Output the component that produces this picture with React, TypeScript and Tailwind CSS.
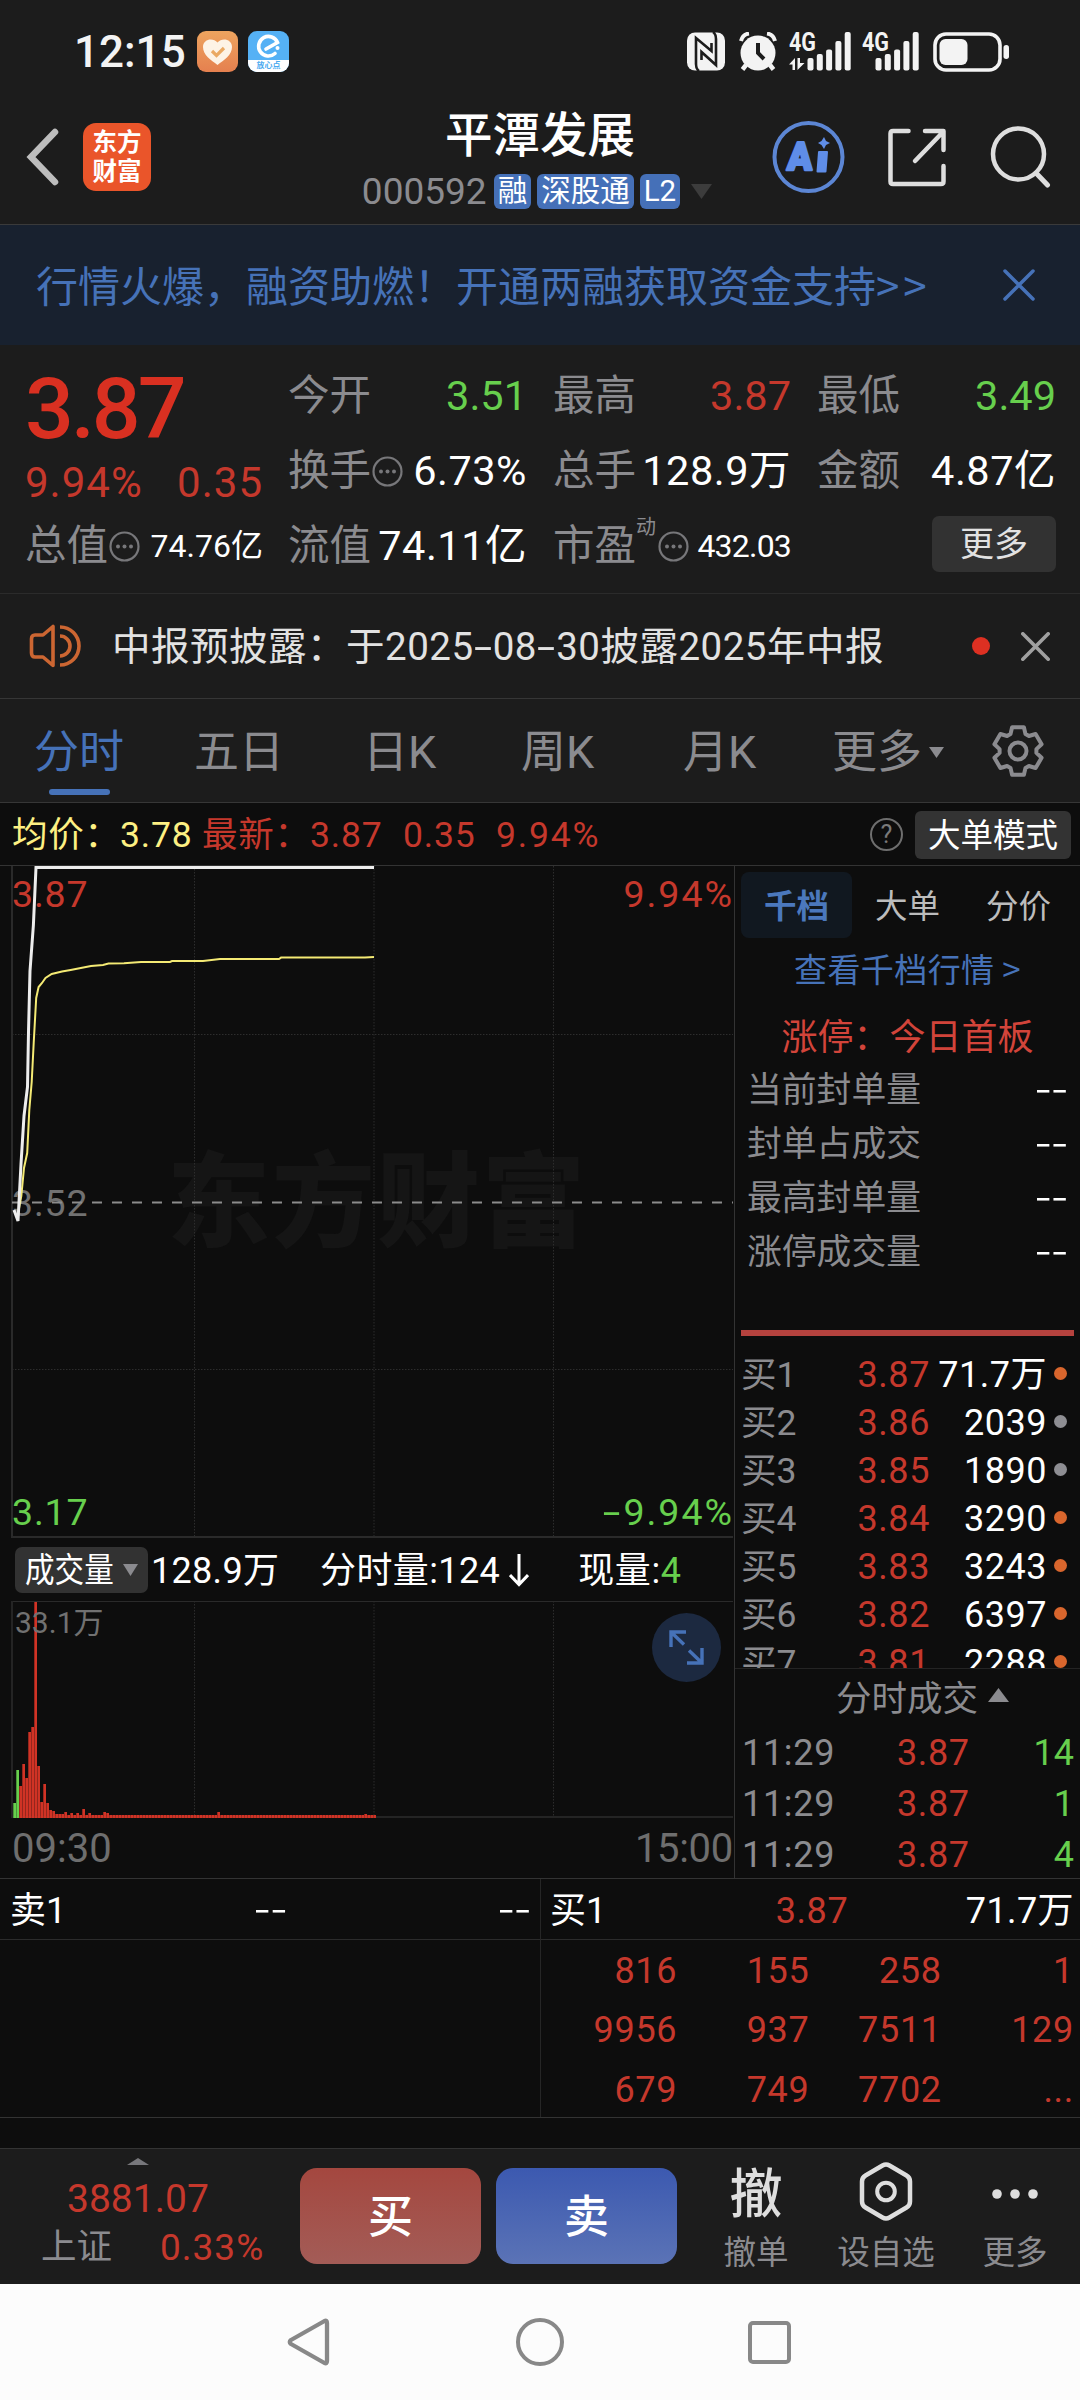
import type { ReactNode } from 'react';
import clsx from 'clsx';

const RED = 'text-[#c5382c]';
const GREEN = 'text-[#67cf4d]';

const bids = [
  { level: '买1', price: '3.87', volume: '71.7万', hot: true },
  { level: '买2', price: '3.86', volume: '2039', hot: false },
  { level: '买3', price: '3.85', volume: '1890', hot: false },
  { level: '买4', price: '3.84', volume: '3290', hot: true },
  { level: '买5', price: '3.83', volume: '3243', hot: true },
  { level: '买6', price: '3.82', volume: '6397', hot: true },
  { level: '买7', price: '3.81', volume: '2288', hot: true },
];

const ticks = [
  { time: '11:29', price: '3.87', volume: '14' },
  { time: '11:29', price: '3.87', volume: '1' },
  { time: '11:29', price: '3.87', volume: '4' },
];

const queue = [
  ['816', '155', '258', '1'],
  ['9956', '937', '7511', '129'],
  ['679', '749', '7702', '...'],
];

const sealStats = ['当前封单量', '封单占成交', '最高封单量', '涨停成交量'];

// Minute volumes in pixels, the quiet minutes after the limit-up are all the same height
const openingVolumes = [
  15, 48, 32, 54, 40, 86, 91, 216, 52, 16, 34, 15, 8, 7, 4, 4, 4, 6, 3, 5, 3, 5, 3, 9, 3, 5, 3, 3, 3, 3, 6, 5,
];
const volumes = Array.from({ length: 121 }, (_, i) => {
  if (i < openingVolumes.length) return openingVolumes[i];
  if (i === 68) return 6;
  if (i === 117) return 4;
  return 3;
});

const pricePoints = '14,344 18,355 21,298 24,250 27.5,221 28.5,166 30,105 33.4,59 36,1.5 374,1.5';
const averagePoints =
  '18,348 21.3,330 24,302 27.2,287 29.3,244 31.7,216 33.7,177 36.2,132 38.6,121 42,117 45.5,112 51.7,108 62,105.5 70.6,104 91,100 103,99 108.5,97.6 124,97.3 141,96 170,96 172,95 203,95 220,93 279,93 281,91.6 365,91.6 374,91';

export default function App() {
  return (
    <div className="flex h-[2400px] w-[1080px] flex-col overflow-hidden bg-[#0d0d0d] font-[Roboto,'Noto_Sans_CJK_SC',sans-serif] leading-none whitespace-nowrap text-white">
      <div className="h-[225px] border-b border-[#3a3a3a] bg-[#1c1c1c]">
        <StatusBar />
        <Header />
      </div>
      <Banner />
      <Quote />
      <Notice />
      <PeriodTabs />
      <AverageRow />
      <div className="flex h-[1012px]">
        <div className="w-[734px]">
          <PriceChart />
          <VolumeHeader />
          <VolumeChart />
          <div className="flex h-[60px] items-center justify-between pt-[2px] pr-[1px] pl-[12px] text-[40px] text-[#6e6e6e]">
            <span>09:30</span>
            <span className="tracking-[-0.300px]">15:00</span>
          </div>
        </div>
        <OrderBook />
      </div>
      <BestOrders />
      <BottomBar />
      <NavBar />
    </div>
  );
}

function StatusBar() {
  return (
    <div className="flex h-[103px] items-center pl-[74px] text-[#f3f3f3]">
      <span className="w-[123px] pt-[1px] text-[44px] font-medium">12:15</span>
      <svg width="41" height="41" viewBox="0 0 41 41">
        <defs>
          <linearGradient id="heartBg" x1="0" y1="0" x2="0" y2="1">
            <stop offset="0" stopColor="#eda45f" />
            <stop offset="1" stopColor="#e5804f" />
          </linearGradient>
        </defs>
        <rect width="41" height="41" rx="9" fill="url(#heartBg)" />
        <path
          d="M20.500 34C14 29 6 24 6 16C6 8 16 6 20.500 11.500C25 6 35 8 35 16C35 24 27 29 20.500 34Z"
          fill="#fdf3e6"
        />
        <path d="M15 20L19.500 24.500L27 17" fill="none" stroke="#eaa963" strokeWidth="3.200" />
      </svg>
      <div className="ml-[10px] flex h-[41px] w-[41px] flex-col items-center overflow-hidden rounded-[9px] bg-[#55b1f5]">
        <svg width="41" height="29" viewBox="0 0 41 29">
          <path
            d="M18 18L29.500 11.500A9.800 9.800 0 1 0 27 22.500"
            fill="none"
            stroke="white"
            strokeWidth="3.600"
            strokeLinecap="round"
          />
          <circle cx="29.500" cy="17" r="2" fill="white" />
        </svg>
        <span className="flex h-[12px] w-full items-center justify-center bg-white text-[8px] font-bold text-[#4aaaf0]">
          放心点
        </span>
      </div>

      <svg className="ml-[398px]" width="38" height="39" viewBox="0 0 38 39">
        <rect y="0.500" width="38" height="38" rx="8" fill="#f3f3f3" />
        <path
          d="M12 39Q9 37 9 32V6L24.500 19V11M26 0Q29 2 29 7V33L14.500 20V28"
          fill="none"
          stroke="#1c1c1c"
          strokeWidth="2.600"
        />
      </svg>
      <svg className="ml-[14px]" width="38" height="39" viewBox="0 0 38 39">
        <circle cx="19" cy="21" r="17.500" fill="#f3f3f3" />
        <path d="M2 9C3 5 6 2 10 1.500M36 9C35 5 32 2 28 1.500" stroke="#f3f3f3" strokeWidth="4" fill="none" />
        <path d="M7 33L3.500 37.500M31 33L34.500 37.500" stroke="#f3f3f3" strokeWidth="4.500" />
        <path d="M19 11V21L25 27" stroke="#1c1c1c" strokeWidth="4" fill="none" />
      </svg>
      <Signal className="ml-[12px] overflow-visible" data />
      <Signal className="ml-[11px] overflow-visible" />
      <svg className="ml-[14px]" width="77" height="40" viewBox="0 0 77 40">
        <rect x="2" y="2" width="65" height="36" rx="11" fill="none" stroke="#f3f3f3" strokeWidth="3.600" />
        <rect x="6.500" y="7" width="28" height="26" rx="6" fill="#f3f3f3" />
        <rect x="70.500" y="13" width="5.500" height="14" rx="2.700" fill="#f3f3f3" />
      </svg>
    </div>
  );
}

function Signal({ className, data }: { className?: string; data?: boolean }) {
  const offset = data ? 18.5 : 13.5;
  const tops = [26, 22, 17.5, 9, 0];

  return (
    <svg className={className} width={data ? 62 : 57} height="39" viewBox={data ? '0 0 62 39' : '0 0 57 39'}>
      <text x="0" y="19" fontSize="26" fontWeight="700" fill="#f3f3f3" textLength="27" lengthAdjust="spacingAndGlyphs">
        4G
      </text>
      {data && (
        <path d="M0 32.500L6 26V38H3.500V32.500ZM8.500 26V38L15.500 31H11V26Z" fill="#f3f3f3" />
      )}
      {tops.map((top, i) => (
        <rect key={top} x={offset + i * 9.300} y={top} width="6" height={38.5 - top} rx="2" fill="#f3f3f3" />
      ))}
    </svg>
  );
}

function Header() {
  return (
    <div className="relative flex h-[108px] items-center">
      <svg className="ml-[26px]" width="34" height="58" viewBox="0 0 34 58">
        <path d="M29 4L5 29L29 54" fill="none" stroke="#bdbdbd" strokeWidth="6.500" strokeLinecap="round" />
      </svg>
      <div className="ml-[23px] flex h-[68px] w-[68px] flex-col items-center justify-center rounded-[13px] bg-[#ea552a] text-[24.500px] leading-[29px] font-bold">
        <span>东方</span>
        <span>财富</span>
      </div>

      {/* Title sits in the middle of the screen, whatever the icons on each side take */}
      <div className="absolute inset-x-0 top-[5px] flex flex-col items-center">
        <h1 className="text-[47.500px] leading-[56px] font-medium">平潭发展</h1>
        <div className="mt-[9px] flex items-center gap-[6px] pr-[6px]">
          <span className="mr-[1px] text-[37px] text-[#8b8b8f]">000592</span>
          <Tag>融</Tag>
          <Tag>深股通</Tag>
          <Tag>L2</Tag>
          <svg className="ml-[5px]" width="21" height="15" viewBox="0 0 21 15">
            <path d="M0 0H21L10.500 15Z" fill="#3c3c3c" />
          </svg>
        </div>
      </div>

      <svg className="ml-[621px]" width="73" height="74" viewBox="0 0 73 74">
        <circle cx="36.500" cy="37" r="34" fill="none" stroke="#5c86d4" strokeWidth="4" />
        <text
          x="15"
          y="50"
          fontSize="39"
          fontWeight="900"
          fill="#5f8de8"
          stroke="#5f8de8"
          strokeWidth="2.500"
          strokeLinejoin="round"
          textLength="25"
          lengthAdjust="spacingAndGlyphs"
          transform="translate(2.500 0) skewX(-3)"
        >
          A
        </text>
        <path d="M47 32H55L53.500 51.500H45.500Z" fill="#5f8de8" stroke="#5f8de8" strokeWidth="2" strokeLinejoin="round" />
        <path d="M52 17L54 21L58 23L54 25L52 29L49.500 25L46 23L49.500 21Z" fill="#5f8de8" />
      </svg>
      <svg className="ml-[43px]" width="58" height="59" viewBox="0 0 58 59">
        <g fill="none" stroke="#dedede" strokeWidth="4.500" strokeLinecap="round" strokeLinejoin="round">
          <path d="M20.500 3H5Q2.500 3 2.500 5.500V53.500Q2.500 56 5 56H53Q55.500 56 55.500 53.500V38" />
          <path d="M37 3H55.500V22M54 5L27 33" />
        </g>
      </svg>
      <svg className="ml-[44px]" width="61" height="62" viewBox="0 0 61 62">
        <circle cx="28.500" cy="28" r="25.500" fill="none" stroke="#dedede" strokeWidth="4.500" />
        <path d="M46 47L57.500 59" stroke="#dedede" strokeWidth="5" strokeLinecap="round" />
      </svg>
    </div>
  );
}

function Tag({ children }: { children: ReactNode }) {
  return (
    <span className="flex h-[35px] items-center rounded-[6px] bg-[#4570b8] px-[4px] text-[29.500px]">
      {children}
    </span>
  );
}

function Banner() {
  return (
    <div className="flex h-[120px] items-center bg-[#18212f] text-[#4672b8]">
      <span className="mb-[2px] ml-[36px] w-[967px] font-['Noto_Sans_CJK_SC',sans-serif] text-[42px] leading-[60px]">
        行情火爆，融资助燃！开通两融获取资金支持<span className="tracking-[4px]">&gt;&gt;</span>
      </span>
      <CloseIcon size={32} width={3.5} color="#4672b8" />
    </div>
  );
}

function CloseIcon({ size, width, color }: { size: number; width: number; color: string }) {
  return (
    <svg width={size} height={size} viewBox="0 0 32 32">
      <path d="M2 2L30 30M30 2L2 30" stroke={color} strokeWidth={width} strokeLinecap="round" />
    </svg>
  );
}

function InfoDots() {
  return (
    <svg width="31" height="31" viewBox="0 0 31 31">
      <circle cx="15.500" cy="15.500" r="14" fill="none" stroke="#77777a" strokeWidth="2.200" />
      <circle cx="9" cy="15.500" r="2" fill="#77777a" />
      <circle cx="15.500" cy="15.500" r="2" fill="#77777a" />
      <circle cx="22" cy="15.500" r="2" fill="#77777a" />
    </svg>
  );
}

interface StatProps {
  label: string;
  value: string;
  valueClass?: string;
  info?: boolean;
}

function Stat({ label, value, valueClass = 'tracking-[0.500px]', info }: StatProps) {
  return (
    <div className="flex h-[75px] items-center justify-between">
      <div className="flex items-center gap-[1px] text-[#8b8b8f]">
        <span>{label}</span>
        {info && <InfoDots />}
      </div>
      <span className={valueClass}>{value}</span>
    </div>
  );
}

function Quote() {
  return (
    <div className="flex h-[249px] border-b border-[#2b2b2b] bg-[#1c1c1c] pt-[14px] pl-[25px] text-[41.500px]">
      <div className="w-[238px]">
        <div className="h-[96px] pt-[8px] text-[86px] leading-[84px] font-medium tracking-[-3px] text-[#d93021]">3.87</div>
        <div className={clsx('flex h-[54px] items-center justify-between pt-[2px] text-[42px] tracking-[1px]', RED)}>
          <span>9.94%</span>
          <span>0.35</span>
        </div>
        <Stat label="总值" value="74.76亿" valueClass="text-[32px]" info />
      </div>
      <div className="ml-[25px] w-[239px]">
        <Stat label="今开" value="3.51" valueClass={GREEN} />
        <Stat label="换手" value="6.73%" info />
        <Stat label="流值" value="74.11亿" />
      </div>
      <div className="ml-[26px] w-[238px]">
        <Stat label="最高" value="3.87" valueClass={RED} />
        <Stat label="总手" value="128.9万" />
        <div className="flex h-[75px] items-center">
          <span className="text-[#8b8b8f]">市盈</span>
          <span className="mr-[2px] mb-[38px] text-[20px] text-[#8b8b8f]">动</span>
          <InfoDots />
          <span className="ml-auto text-[32px] tracking-[-0.800px]">432.03</span>
        </div>
      </div>
      <div className="ml-[26px] w-[239px]">
        <Stat label="最低" value="3.49" valueClass={GREEN} />
        <Stat label="金额" value="4.87亿" />
        <div className="flex h-[71px] items-center justify-end">
          <button className="h-[56px] w-[124px] rounded-[7px] bg-[#323232] text-[34px] text-[#e2e2e2]">更多</button>
        </div>
      </div>
    </div>
  );
}

function Notice() {
  return (
    <div className="flex h-[106px] items-center border-b border-[#363636] bg-[#1c1c1c]">
      <svg className="ml-[29px]" width="52" height="44" viewBox="0 0 52 44">
        <g fill="none" stroke="#cc6632" strokeWidth="3.600" strokeLinejoin="round">
          <path d="M24 2.500V41.500L14 33H6Q2.500 33 2.500 29V15Q2.500 11 6 11H14Z" />
          <path d="M31 3A19 19 0 0 1 31 41M31 12A10 10 0 0 1 31 32" />
        </g>
      </svg>
      <span className="ml-[31px] w-[860px] pt-[2px] text-[38.500px] tracking-[0.500px] text-[#e2e2e2]">
        中报预披露：于2025<Hyphen />
        08<Hyphen />
        30披露2025年中报
      </span>
      <span className="h-[18px] w-[18px] rounded-full bg-[#dd3022]" />
      <span className="ml-[31px]">
        <CloseIcon size={29} width={4} color="#a0a0a0" />
      </span>
    </div>
  );
}

// Roboto's hyphen is too narrow next to the digits, so stretch it
function Hyphen() {
  return <span className="mx-[4px] inline-block scale-x-[1.700]">-</span>;
}

function PeriodTabs() {
  return (
    <div className="relative flex h-[104px] items-center border-b border-[#363636] bg-[#1c1c1c] pt-[3px] text-[45px] text-[#8b8b8f]">
      <span className="ml-[34px] w-[160px] text-[#4672b8]">分时</span>
      <span className="w-[169px]">五日</span>
      <span className="w-[158px]">日K</span>
      <span className="w-[162px]">周K</span>
      <span className="w-[149px]">月K</span>
      <span className="w-[97px]">更多</span>
      <svg width="15" height="11" viewBox="0 0 15 11">
        <path d="M0 0H15L7.500 11Z" fill="#8b8b8f" />
      </svg>
      <span className="ml-[47px] pb-[2px]">
        <GearIcon />
      </span>
      <span className="absolute bottom-[7px] left-[49px] h-[6px] w-[61px] rounded-full bg-[#4672b8]" />
    </div>
  );
}

function GearIcon() {
  const corners = [
    [-24, 18.5],
    [-14, 24.5],
    [14, 24.5],
    [24, 18.5],
  ];
  const points = [0, 60, 120, 180, 240, 300].flatMap((tooth) =>
    corners.map(([angle, radius]) => {
      const rad = ((tooth + angle - 90) * Math.PI) / 180;
      return `${(27 + radius * Math.cos(rad)).toFixed(1)},${(27 + radius * Math.sin(rad)).toFixed(1)}`;
    })
  );

  return (
    <svg width="54" height="54" viewBox="0 0 54 54" fill="none" stroke="#8b8b8f" strokeWidth="4">
      <polygon points={points.join(' ')} strokeLinejoin="round" />
      <circle cx="27" cy="27" r="8.500" />
    </svg>
  );
}

function AverageRow() {
  return (
    <div className="flex h-[63px] items-center border-b border-[#333] pt-[1px] text-[35.500px]">
      <div className="flex pt-[2px] pl-[12px] tracking-[0.800px]">
        <span className="w-[108px] text-[#fdf083]">均价：</span>
        <span className="w-[82px] text-[#fdf083]">3.78</span>
        <span className={clsx('w-[108px]', RED)}>最新：</span>
        <span className={clsx('w-[93px]', RED)}>3.87</span>
        <span className={clsx('w-[93px]', RED)}>0.35</span>
        <span className={clsx('tracking-[1.800px]', RED)}>9.94%</span>
      </div>
      <span className="ml-auto flex h-[33px] w-[33px] items-center justify-center rounded-full border-[2.500px] border-[#6e6e6e] text-[25px] text-[#7a7a7a]">
        ?
      </span>
      <button className="mr-[9px] ml-[12px] h-[48px] w-[156px] rounded-[6px] bg-[#333] pt-[2px] text-[32.500px]">
        大单模式
      </button>
    </div>
  );
}

function PriceChart() {
  return (
    <div className="relative h-[672px] text-[37.500px] tracking-[0.800px]">
      <span className="absolute top-[288px] left-[167px] text-[103px] leading-[100px] font-black tracking-[2px] text-[#151515]">
        东方财富
      </span>
      <span className={clsx('absolute top-[10px] left-[12px]', RED)}>3.87</span>
      <span className={clsx('absolute top-[10px] right-0 tracking-[2px]', RED)}>9.94%</span>
      <span className="absolute top-[319px] left-[12px] text-[#717171]">3.52</span>
      <span className={clsx('absolute top-[628px] left-[12px]', GREEN)}>3.17</span>
      <span className={clsx('absolute top-[628px] right-0 tracking-[2px]', GREEN)}>
        <Hyphen />
        9.94%
      </span>
      <svg className="relative block" width="734" height="672" viewBox="0 0 734 672" fill="none">
        <g stroke="#2d2d2d" strokeDasharray="1.500 1.500">
          <path d="M194.500 0V671M374 0V671M553.500 0V671" />
          <path d="M12 168.500H733M12 503.500H733" />
        </g>
        <path d="M12 0V671H733" stroke="#2a2a2a" strokeWidth="2" />
        <path d="M12 336.500H733" stroke="#8c8c8c" strokeWidth="1.800" strokeDasharray="10 10" />
        <polyline points={averagePoints} stroke="#f4ea74" strokeWidth="2" />
        <polyline points={pricePoints} stroke="#ededed" strokeWidth="3" />
      </svg>
    </div>
  );
}

function VolumeHeader() {
  return (
    <div className="flex h-[63px] items-center pt-[1px] text-[36px]">
      <div className="ml-[15px] flex h-[46px] w-[133px] items-center rounded-[7px] bg-[#323232] pl-[10px]">
        <span className="w-[98px] origin-left scale-x-[0.870] text-[34px]">成交量</span>
        <svg width="15" height="12" viewBox="0 0 15 12">
          <path d="M0 0H15L7.500 12Z" fill="#8b8b8f" />
        </svg>
      </div>
      <span className="ml-[3px] w-[169px] pt-[1px] tracking-[0.300px]">128.9万</span>
      <span className="pt-[1px] tracking-[0.400px]">分时量:124</span>
      <svg className="ml-[9px]" width="20" height="34" viewBox="0 0 20 34">
        <path d="M10 1V31M1 22L10 31.500L19 22" fill="none" stroke="white" strokeWidth="3" />
      </svg>
      <span className="ml-[49px] pt-[1px] tracking-[0.600px]">
        现量:<span className={GREEN}>4</span>
      </span>
    </div>
  );
}

function VolumeChart() {
  return (
    <div className="relative h-[217px]">
      <svg className="block" width="734" height="217" viewBox="0 0 734 217">
        <path d="M194.500 0V217M374 0V217M553.500 0V217" stroke="#2d2d2d" strokeDasharray="1.500 1.500" />
        <path d="M12 0.500H733" stroke="#2a2a2a" />
        <path d="M12 0V216H733" fill="none" stroke="#242424" strokeWidth="2" />
        {volumes.map((height, i) => (
          <rect
            key={i}
            x={13.3 + i * 3}
            y={217 - height}
            width="2.700"
            height={height}
            fill={i < 2 ? '#67cf4d' : '#d03325'}
          />
        ))}
      </svg>
      <span className="absolute top-[7px] left-[15px] text-[30px] text-[#717171]">33.1万</span>
      <span className="absolute top-[12px] left-[652px] flex h-[69px] w-[69px] items-center justify-center rounded-full bg-[#1c2940]">
        <svg width="35" height="35" viewBox="0 0 35 35" fill="none" stroke="#4672b8" strokeWidth="3.400">
          <path d="M2 17V2H17M2 2L15 14.500M33 18V33H18M33 33L20 20.500" />
        </svg>
      </span>
    </div>
  );
}

function OrderBook() {
  return (
    <div className="flex w-[346px] flex-col border-l border-[#333]">
      <div className="mx-[6px] mt-[6px] grid h-[66px] grid-cols-3 text-[32.500px] text-[#bcbcbc]">
        <span className="flex items-center justify-center rounded-[8px] bg-[#111820] pt-[4px] font-bold text-[#4b78bd]">
          千档
        </span>
        <span className="flex items-center justify-center pt-[4px]">大单</span>
        <span className="flex items-center justify-center pt-[4px]">分价</span>
      </div>
      <div className="flex h-[62px] items-center justify-center pb-[1px] font-['Noto_Sans_CJK_SC',sans-serif] text-[33px] tracking-[0.400px] text-[#4672b8]">
        查看千档行情 &gt;
      </div>
      <div className="flex h-[62px] items-center justify-center pt-[14px] text-[36px] text-[#d2443a]">涨停：今日首板</div>
      {sealStats.map((label) => (
        <div key={label} className="flex h-[54px] items-center justify-between pt-[3px] pr-[12px] pl-[12px] text-[34.800px]">
          <span className="text-[#8b8b8f]">{label}</span>
          <Dashes />
        </div>
      ))}
      <div className="mx-[6px] mt-[52px] h-[6px] bg-[#b5423e]" />
      <div className="mt-[13px] h-[320px] overflow-hidden border-b border-[#242424] pt-[2px] text-[36px]">
        {bids.map((bid) => (
          <div key={bid.level} className="flex h-[48px] items-center pl-[6px]">
            <span className="w-[80px] text-[35.500px] text-[#8b8b8f]">{bid.level}</span>
            <span className={clsx('w-[109px] text-right tracking-[0.600px]', RED)}>{bid.price}</span>
            <span className="w-[117px] text-right tracking-[0.500px]">{bid.volume}</span>
            <span
              className={clsx('mb-[3px] ml-[7px] h-[13px] w-[13px] rounded-full', bid.hot ? 'bg-[#d9662d]' : 'bg-[#8e8e93]')}
            />
          </div>
        ))}
      </div>
      <div className="flex h-[56px] items-center justify-center gap-[10px] pt-[5px] pr-[1px] pl-[31px] text-[35.500px] text-[#8b8b8f]">
        分时成交
        <svg className="mb-[9px]" width="21" height="14" viewBox="0 0 21 14">
          <path d="M0 14H21L10.500 0Z" fill="#8b8b8f" />
        </svg>
      </div>
      {ticks.map((tick, i) => (
        <div key={i} className="flex h-[51px] items-center pt-[4px] pr-[6px] pl-[7px] text-[36px]">
          <span className="w-[155px] tracking-[0.700px] text-[#8b8b8f]">{tick.time}</span>
          <span className={clsx('tracking-[0.600px]', RED)}>{tick.price}</span>
          <span className={clsx('ml-auto', GREEN)}>{tick.volume}</span>
        </div>
      ))}
    </div>
  );
}

// Placeholder for an empty value, raised to the middle of the text beside it
function Dashes() {
  return (
    <span className="block pb-[16px] font-['Noto_Sans_CJK_SC',sans-serif] text-[50px] leading-[24px] font-light text-white">
      --
    </span>
  );
}

function BestOrders() {
  return (
    <div className="h-[270px] border-t border-[#333] text-[36px]">
      <div className="flex h-[239px] border-b border-[#333]">
        <div className="w-[540px]">
          <div className="grid h-[61px] grid-cols-3 items-center border-b border-[#2b2b2b] pt-[3px] pr-[9px] pl-[10px]">
            <span>卖1</span>
            <span className="text-center">
              <Dashes />
            </span>
            <span className="text-right">
              <Dashes />
            </span>
          </div>
        </div>
        <div className="w-[540px] border-l border-[#262626]">
          <div className="grid h-[61px] grid-cols-3 items-center border-b border-[#2b2b2b] pt-[3px] pr-[6px] pl-[9px]">
            <span>买1</span>
            <span className={clsx('text-center tracking-[0.600px]', RED)}>3.87</span>
            <span className="text-right tracking-[0.400px]">71.7万</span>
          </div>
          {queue.map((row) => (
            <div
              key={row[0]}
              className={clsx('mr-[6px] ml-[4px] grid h-[59.500px] grid-cols-4 items-center pt-[1px] tracking-[0.700px]', RED)}
            >
              {row.map((amount) => (
                <span key={amount} className="text-right">
                  {amount}
                </span>
              ))}
            </div>
          ))}
        </div>
      </div>
    </div>
  );
}

function BottomBar() {
  return (
    <div className="flex h-[136px] border-t border-[#333] bg-[#1c1c1c]">
      <div className="flex w-[300px] flex-col pt-[9px]">
        <svg className="ml-[127px]" width="22" height="7" viewBox="0 0 22 7">
          <path d="M0 7H22L11 0Z" fill="#77777b" />
        </svg>
        <span className={clsx('mt-[15px] ml-[67px] text-[39px]', RED)}>3881.07</span>
        <div className="mt-[10px] flex items-center pl-[41px]">
          <span className="w-[119px] pt-[1px] text-[35.500px] text-[#8b8b8f]">上证</span>
          <span className={clsx('text-[37px] tracking-[1px]', RED)}>0.33%</span>
        </div>
      </div>
      <div className="flex gap-[15px] pt-[19px]">
        <button className="h-[96px] w-[181px] rounded-[17px] bg-linear-to-b from-[#a4473f] to-[#a35c57] pt-[2px] text-[45px] font-medium">
          买
        </button>
        <button className="h-[96px] w-[181px] rounded-[17px] bg-linear-to-b from-[#3c59b0] to-[#5b73b6] pt-[2px] text-[45px] font-medium">
          卖
        </button>
      </div>
      <Action className="ml-[20px] w-[118px]" label="撤单">
        <span className="pt-[6px] text-[53px] font-medium text-[#dedede]">撤</span>
      </Action>
      <Action className="ml-[12px] w-[118px]" label="设自选">
        <svg className="mb-[2px]" width="54" height="59" viewBox="0 0 54 59" fill="none" stroke="#dedede">
          <path
            d="M23.500 3.500Q27 1.500 30.500 3.500L47.500 13.500Q51 15.500 51 19.500V39.500Q51 43.500 47.500 45.500L30.500 55.500Q27 57.500 23.500 55.500L6.500 45.500Q3 43.500 3 39.500V19.500Q3 15.500 6.500 13.500Z"
            strokeWidth="4.500"
          />
          <circle cx="27" cy="29.500" r="8.800" strokeWidth="4" />
        </svg>
      </Action>
      <Action className="ml-[11px] w-[118px]" label="更多">
        <svg className="mt-[3px]" width="48" height="12" viewBox="0 0 48 12" fill="#dedede">
          <circle cx="6" cy="6" r="4.800" />
          <circle cx="24" cy="6" r="4.800" />
          <circle cx="42" cy="6" r="4.800" />
        </svg>
      </Action>
    </div>
  );
}

function Action({ className, label, children }: { className: string; label: string; children: ReactNode }) {
  return (
    <div className={clsx('flex flex-col items-center pt-[12px]', className)}>
      <span className="flex h-[62px] items-center">{children}</span>
      <span className="mt-[14px] text-[32.500px] text-[#8b8b8f]">{label}</span>
    </div>
  );
}

function NavBar() {
  return (
    <div className="flex h-[116px] items-center bg-[#fcfcfc] pl-[287px]">
      <svg width="44" height="48" viewBox="0 0 44 48">
        <path
          d="M37.500 3Q40 2 40 5V43Q40 46 37.500 45L4 26Q1.500 24 4 22Z"
          fill="none"
          stroke="#888"
          strokeWidth="4.300"
          strokeLinejoin="round"
        />
      </svg>
      <span className="ml-[185px] h-[48px] w-[48px] rounded-full border-[4.500px] border-[#888]" />
      <span className="ml-[184px] h-[43px] w-[43px] rounded-[5px] border-[4.500px] border-[#888]" />
    </div>
  );
}
